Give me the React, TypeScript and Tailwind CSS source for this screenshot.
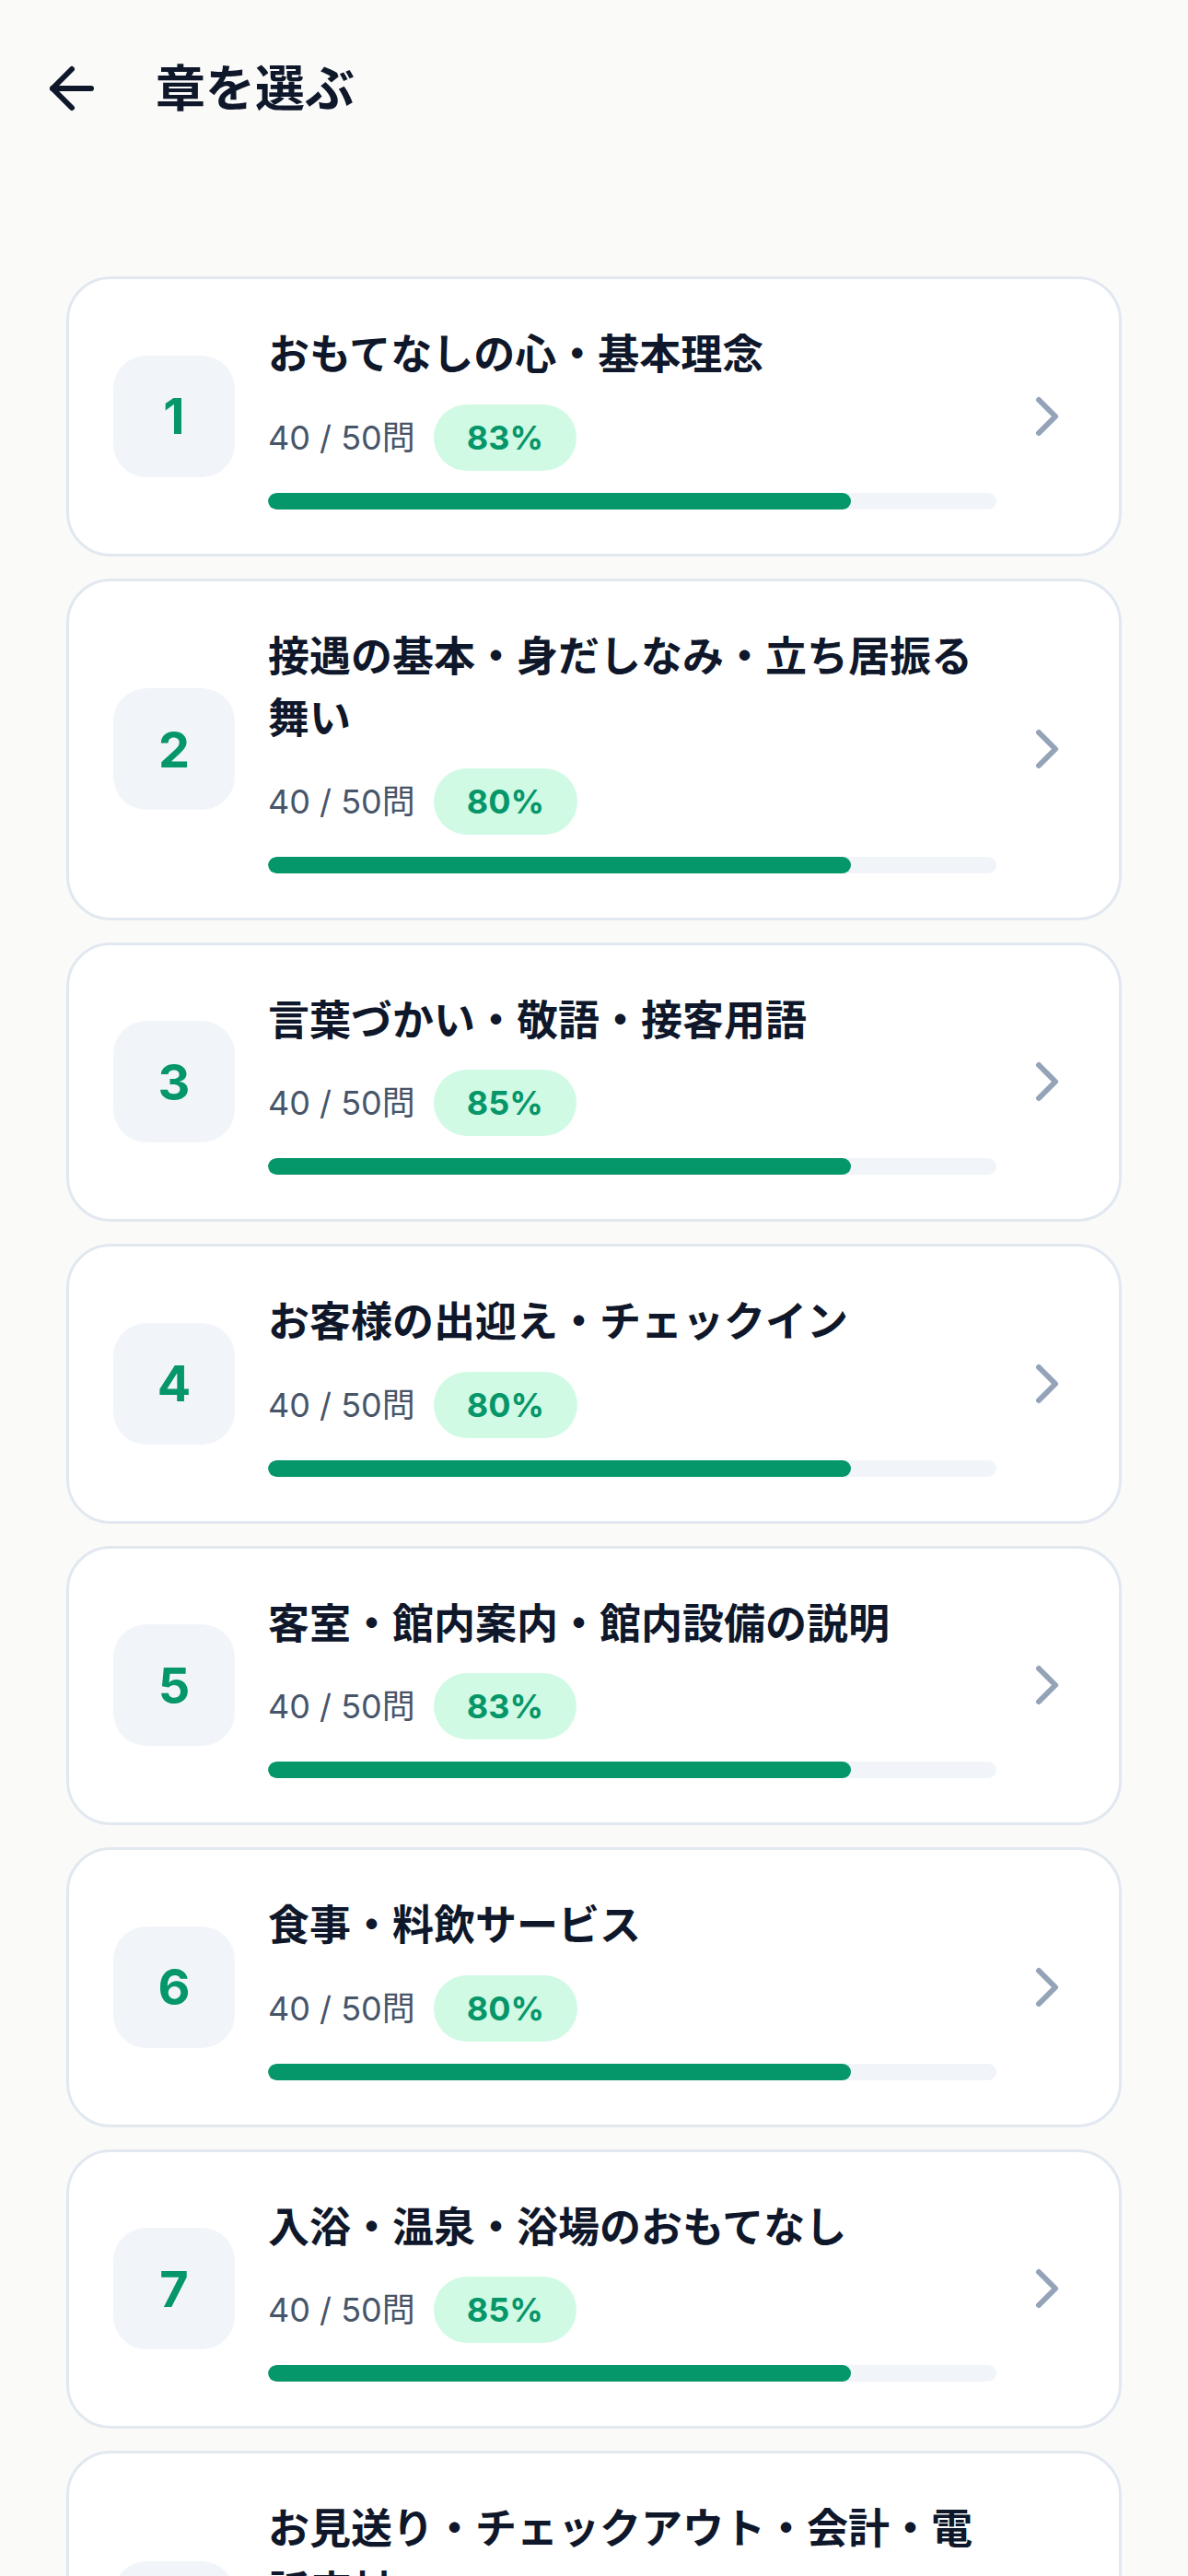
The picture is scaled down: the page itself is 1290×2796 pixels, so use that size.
import { ArrowLeft, ChevronRight } from "lucide-react";

interface Chapter {
  no: number;
  title: string;
  done: number;
  total: number;
  rate: number;
}

const chapters: Chapter[] = [
  { no: 1, title: "おもてなしの心・基本理念", done: 40, total: 50, rate: 83 },
  { no: 2, title: "接遇の基本・身だしなみ・立ち居振る舞い", done: 40, total: 50, rate: 80 },
  { no: 3, title: "言葉づかい・敬語・接客用語", done: 40, total: 50, rate: 85 },
  { no: 4, title: "お客様の出迎え・チェックイン", done: 40, total: 50, rate: 80 },
  { no: 5, title: "客室・館内案内・館内設備の説明", done: 40, total: 50, rate: 83 },
  { no: 6, title: "食事・料飲サービス", done: 40, total: 50, rate: 80 },
  { no: 7, title: "入浴・温泉・浴場のおもてなし", done: 40, total: 50, rate: 85 },
  { no: 8, title: "お見送り・チェックアウト・会計・電話応対", done: 40, total: 50, rate: 83 },
];

function ChapterCard({ chapter }: { chapter: Chapter }) {
  const progress = (chapter.done / chapter.total) * 100;

  return (
    <button className="w-full flex items-center text-left bg-white border-[3px] border-[#e2e8f0] rounded-[48px] pl-[48px] pr-[42px] py-[48px]">
      {/* Chapter number */}
      <div className="w-[132px] h-[132px] shrink-0 rounded-[36px] bg-[#f1f5f9] flex items-center justify-center">
        <span className="text-[54px] font-bold text-[#059669]">{chapter.no}</span>
      </div>

      {/* Body */}
      <div className="flex-1 min-w-0 ml-[36px]">
        <h2 className="text-[45px] leading-[1.5] font-bold text-[#0f172a]">{chapter.title}</h2>
        <div className="flex items-center gap-[20px] mt-[20px]">
          <span className="text-[36px] text-[#475569]">
            {chapter.done} / {chapter.total}問
          </span>
          <span className="h-[72px] px-[36px] rounded-full bg-[#d1fae5] flex items-center text-[36px] font-bold text-[#059669]">
            {chapter.rate}%
          </span>
        </div>
        <div className="mt-[24px] h-[18px] rounded-full bg-[#f1f5f9] overflow-hidden">
          <div className="h-full rounded-full bg-[#059669]" style={{ width: `${progress}%` }} />
        </div>
      </div>

      <ChevronRight className="shrink-0 ml-[19px] text-[#94a3b8]" size={72} strokeWidth={2} />
    </button>
  );
}

export default function App() {
  return (
    <div
      className="min-h-screen bg-[#fafaf9]"
      style={{ fontFamily: 'Inter, "Noto Sans CJK JP", sans-serif' }}
    >
      {/* Header */}
      <header className="h-[192px] flex items-center pl-[42px]">
        <ArrowLeft size={72} strokeWidth={2} className="text-[#0f172a]" />
        <h1 className="ml-[55px] text-[54px] font-bold text-[#0f172a]">章を選ぶ</h1>
      </header>

      {/* Chapter list */}
      <main className="px-[72px] pt-[108px] pb-[72px] flex flex-col gap-[24px]">
        {chapters.map((c) => (
          <ChapterCard key={c.no} chapter={c} />
        ))}
      </main>
    </div>
  );
}
